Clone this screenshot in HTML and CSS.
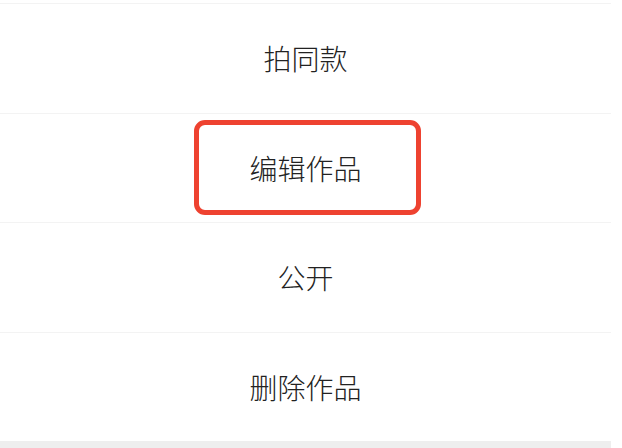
FILE: index.html
```html
<!DOCTYPE html>
<html lang="zh-CN">
<head>
<meta charset="utf-8">
<title>操作菜单</title>
<link rel="stylesheet" href="styles.css">
</head>
<body>
<div class="sheet">
  <div class="item">拍同款</div>
  <div class="item">编辑作品<span class="mark"></span></div>
  <div class="item">公开</div>
  <div class="item">删除作品</div>
  <div class="footer"></div>
</div>
</body>
</html>
```
FILE: styles.css
```css
html, body {
  margin: 0;
  padding: 0;
  background: #ffffff;
}
.sheet {
  width: 611px;
  height: 448px;
  padding-top: 3px;
  box-sizing: border-box;
  display: flex;
  flex-direction: column;
  background: #ffffff;
}
.item {
  position: relative;
  height: 108.5px;
  flex: none;
  border-top: 1px solid #f3f3f3;
  display: flex;
  align-items: center;
  justify-content: center;
  font-family: "Noto Sans CJK SC", "Noto Sans", sans-serif;
  font-size: 28px;
  font-weight: 300;
  color: #222222;
}
.mark {
  position: absolute;
  left: 194px;
  top: 6px;
  width: 227px;
  height: 95px;
  box-sizing: border-box;
  border: 5px solid #ee4230;
  border-radius: 11px;
}
.footer {
  flex: 1;
  background: #eeeeee;
}
```
